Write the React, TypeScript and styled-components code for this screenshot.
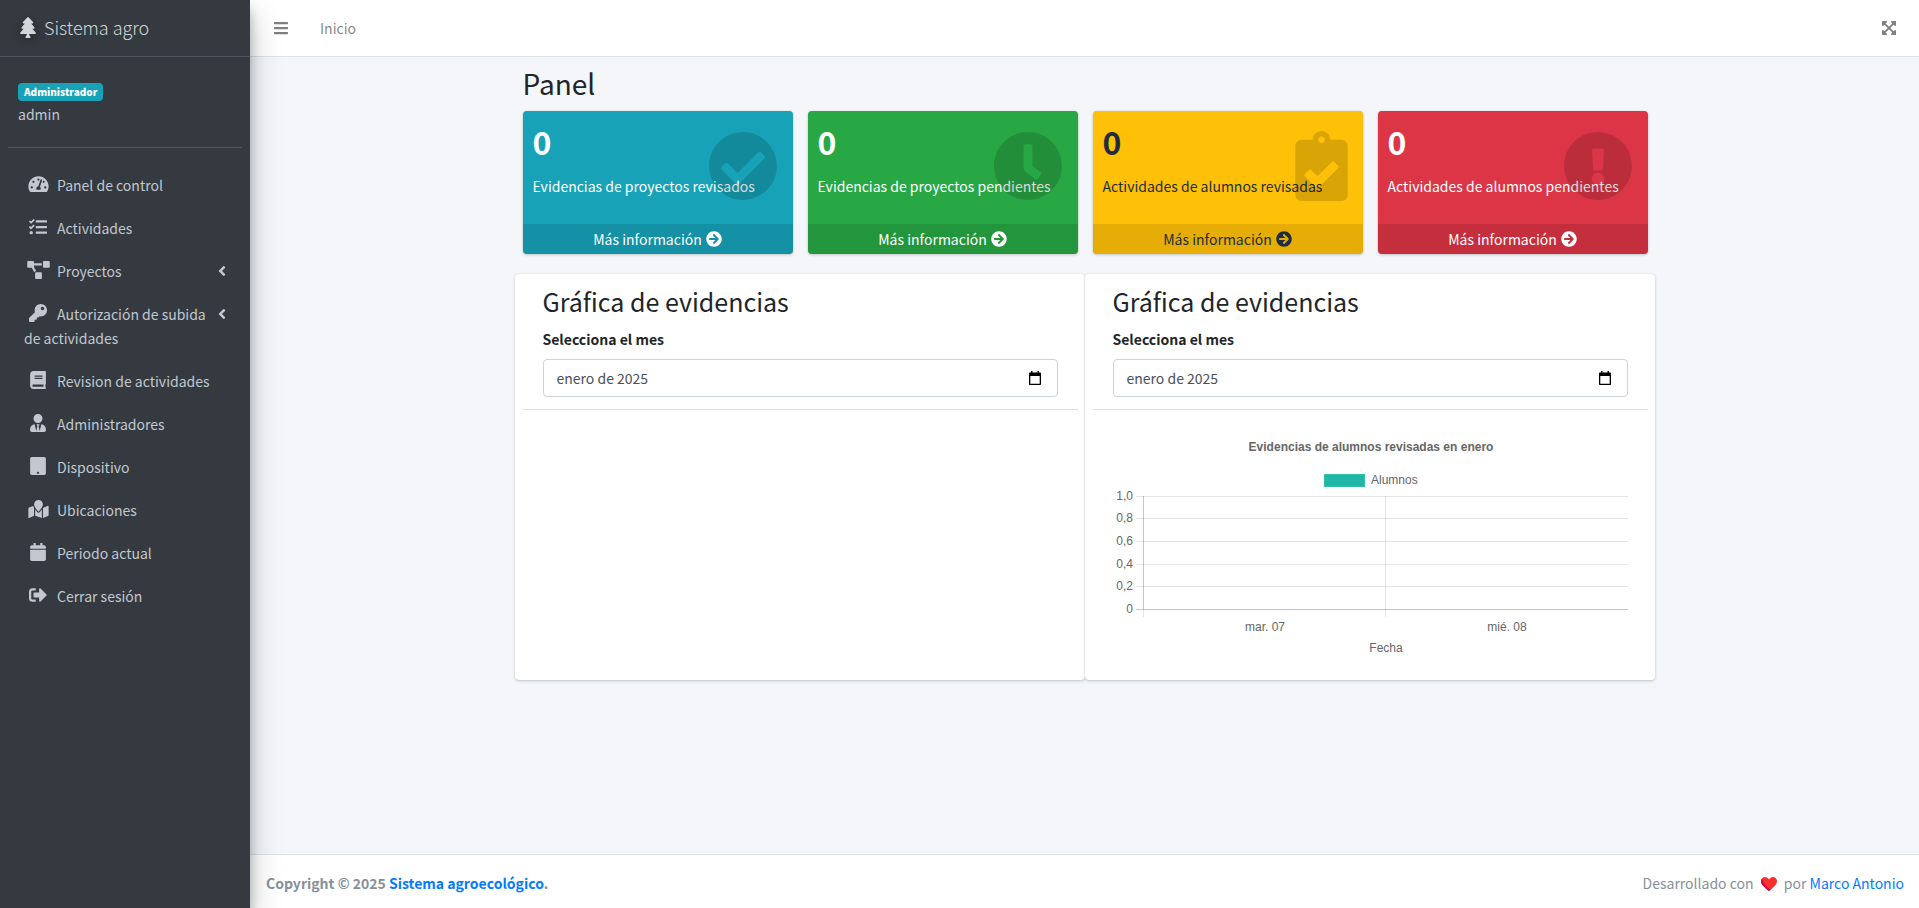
import React from 'react';
import styled, { createGlobalStyle } from 'styled-components';
import type { IconType } from 'react-icons';
import {
  FaAngleLeft,
  FaArrowCircleRight,
  FaBars,
  FaBook,
  FaCalendar,
  FaCheckCircle,
  FaClipboardCheck,
  FaClock,
  FaExclamationCircle,
  FaExpandArrowsAlt,
  FaKey,
  FaMapMarked,
  FaProjectDiagram,
  FaSignOutAlt,
  FaTablet,
  FaTachometerAlt,
  FaTasks,
  FaTree,
  FaUserTie,
} from 'react-icons/fa';

const GlobalStyle = createGlobalStyle`
  *, *::before, *::after { box-sizing: border-box; }
  body {
    margin: 0;
    background: #f4f6f9;
    color: #212529;
    font-family: 'Noto Sans CJK SC', 'Open Sans', sans-serif;
    font-size: 14px;
    line-height: 24px;
  }
  a { color: #007bff; text-decoration: none; }
  h1, h2, p { margin: 0; font-weight: 400; }
  button { font: inherit; padding: 0; border: 0; background: none; cursor: pointer; }
`;

const Page = styled.div`
  display: flex;
  min-height: 100vh;
`;

/* ---------- Sidebar ---------- */

const Sidebar = styled.aside`
  position: relative;
  z-index: 2;
  flex: 0 0 250px;
  background: #343a40;
  color: #c2c7d0;
  box-shadow: 0 14px 28px rgba(0, 0, 0, 0.25), 0 10px 10px rgba(0, 0, 0, 0.22);
`;

const Brand = styled.a`
  display: flex;
  align-items: center;
  gap: 8px;
  height: 57px;
  padding: 0 20px 2px;
  border-bottom: 1px solid #4b545c;
  color: rgba(255, 255, 255, 0.8);
  font-size: 18px;
  font-weight: 300;

  svg {
    width: 16px;
    height: 21px;
    filter: drop-shadow(0 3px 4px rgba(0, 0, 0, 0.4));
  }
`;

const UserPanel = styled.div`
  display: flex;
  flex-direction: column;
  align-items: flex-start;
  margin: 0 8px;
  padding: 26px 10px 21px;
  border-bottom: 1px solid #4f5962;
`;

const Badge = styled.span`
  padding: 0 6px;
  border-radius: 4px;
  background: #17a2b8;
  color: #fff;
  font-size: 10px;
  font-weight: 900;
  line-height: 18px;
`;

const UserName = styled.a`
  margin-top: 1px;
  color: #c2c7d0;
`;

const Menu = styled.ul`
  display: flex;
  flex-direction: column;
  gap: 3px;
  margin: 17px 8px;
  padding: 0;
  list-style: none;
`;

const MenuLink = styled.a`
  display: flex;
  justify-content: space-between;
  padding: 8px 16px;
  color: #c2c7d0;
`;

const MenuIcon = styled.span<{ $width: number }>`
  display: inline-flex;
  justify-content: center;
  width: 28px;
  margin-right: 5px;
  vertical-align: -2px;

  svg {
    flex: none;
    width: ${(p) => p.$width}px;
    height: 18px;
  }
`;

const Arrow = styled.span`
  display: flex;
  flex: none;
  align-items: center;
  height: 24px;

  svg {
    width: 8px;
    height: 16px;
  }
`;

/* ---------- Main column ---------- */

const Main = styled.div`
  display: flex;
  flex: 1;
  flex-direction: column;
  min-width: 0;
`;

const Topbar = styled.header`
  display: flex;
  align-items: center;
  height: 57px;
  padding: 0 23px 0 24px;
  border-bottom: 1px solid #dee2e6;
  background: #fff;
  color: rgba(0, 0, 0, 0.5);

  a { color: inherit; }
`;

const IconButton = styled.button`
  display: flex;
  color: inherit;

  svg {
    width: 14px;
    height: 16px;
  }
`;

const TopNav = styled.nav`
  flex: 1;
  margin-left: 32px;
`;

const Content = styled.main`
  flex: 1;
  width: 100%;
  max-width: 1140px;
  margin: 0 auto;
  padding-top: 7px;
`;

const PageTitle = styled.h1`
  padding: 0 8px;
  font-size: 28px;
  line-height: 38px;
`;

const Boxes = styled.div`
  display: grid;
  grid-template-columns: repeat(4, 1fr);
  gap: 15px;
  margin: 9px 7px 20px 8px;
`;

const cardShadow = '0 0 1px rgba(0, 0, 0, 0.125), 0 1px 3px rgba(0, 0, 0, 0.2)';

const Box = styled.section<{ $bg: string; $fg: string }>`
  position: relative;
  overflow: hidden;
  border-radius: 4px;
  background: ${(p) => p.$bg};
  color: ${(p) => p.$fg};
  box-shadow: ${cardShadow};
`;

const BoxBody = styled.div`
  height: 113px;
  padding: 8px 10px;
`;

const Count = styled.p`
  margin-bottom: 11px;
  font-size: 32px;
  font-weight: 700;
  line-height: 44px;
`;

const BoxIcon = styled.span<{ $width: number }>`
  position: absolute;
  top: 20px;
  right: 15px;
  display: flex;
  color: rgba(0, 0, 0, 0.15);

  svg {
    width: ${(p) => p.$width}px;
    height: 70px;
  }
`;

const BoxFooter = styled.a`
  display: flex;
  align-items: center;
  justify-content: center;
  gap: 4px;
  height: 30px;
  background: rgba(0, 0, 0, 0.1);
  color: inherit;

  svg {
    width: 16px;
    height: 16px;
  }
`;

const Charts = styled.div`
  display: grid;
  grid-template-columns: repeat(2, 1fr);
`;

const Card = styled.section`
  min-height: 406px;
  border-radius: 4px;
  background: #fff;
  box-shadow: ${cardShadow};
`;

const CardHead = styled.div`
  margin: 0 7px 0 8px;
  padding: 10px 20px 12px;
  border-bottom: 1px solid rgba(0, 0, 0, 0.125);
`;

const CardTitle = styled.h2`
  margin-bottom: 9px;
  font-size: 25px;
  line-height: 34px;
`;

const Label = styled.label`
  display: block;
  margin-bottom: 8px;
  font-weight: 700;
`;

const Field = styled.div`
  display: flex;
  align-items: center;
  height: 38px;
  padding: 0 15px 0 13px;
  border: 1px solid #ced4da;
  border-radius: 4px;
  background: #fff;
`;

const MonthInput = styled.input`
  flex: 1;
  min-width: 0;
  padding: 0;
  border: 0;
  outline: 0;
  background: none;
  color: #495057;
  font: inherit;
`;

const ChartArea = styled.div`
  padding: 20px 27px 20px 28px;

  svg {
    display: block;
    width: 100%;
    height: auto;
  }

  text {
    fill: #666;
    font-family: 'Liberation Sans', Arial, sans-serif;
    font-size: 12px;
  }
`;

const Footer = styled.footer`
  display: flex;
  justify-content: space-between;
  padding: 16px 15px 13px 16px;
  border-top: 1px solid #dee2e6;
  background: #fff;
  color: #869099;

  svg {
    margin: 0 4px;
    vertical-align: -3px;
  }
`;

const menu: { label: string; icon: IconType; width?: number; sub?: boolean }[] = [
  { label: 'Panel de control', icon: FaTachometerAlt, width: 21 },
  { label: 'Actividades', icon: FaTasks },
  { label: 'Proyectos', icon: FaProjectDiagram, width: 23, sub: true },
  { label: 'Autorización de subida de actividades', icon: FaKey, sub: true },
  { label: 'Revision de actividades', icon: FaBook },
  { label: 'Administradores', icon: FaUserTie },
  { label: 'Dispositivo', icon: FaTablet },
  { label: 'Ubicaciones', icon: FaMapMarked, width: 21 },
  { label: 'Periodo actual', icon: FaCalendar },
  { label: 'Cerrar sesión', icon: FaSignOutAlt },
];

const boxes: { label: string; icon: IconType; width: number; bg: string; fg: string }[] = [
  { label: 'Evidencias de proyectos revisados', icon: FaCheckCircle, width: 70, bg: '#17a2b8', fg: '#fff' },
  { label: 'Evidencias de proyectos pendientes', icon: FaClock, width: 70, bg: '#28a745', fg: '#fff' },
  { label: 'Actividades de alumnos revisadas', icon: FaClipboardCheck, width: 53, bg: '#ffc107', fg: '#1f2d3d' },
  { label: 'Actividades de alumnos pendientes', icon: FaExclamationCircle, width: 70, bg: '#dc3545', fg: '#fff' },
];

const ticks = [
  { label: '1,0', y: 66 },
  { label: '0,8', y: 88 },
  { label: '0,6', y: 111 },
  { label: '0,4', y: 134 },
  { label: '0,2', y: 156 },
  { label: '0', y: 179 },
];

function EvidenceChart() {
  return (
    <svg viewBox="0 0 515 230" role="img" aria-label="Evidencias de alumnos revisadas en enero">
      <text x="258" y="21" textAnchor="middle" fontWeight="700">
        Evidencias de alumnos revisadas en enero
      </text>
      <rect x="211.5" y="44.5" width="40" height="12" fill="#20b7a9" stroke="#34c0a4" />
      <text x="258" y="54">Alumnos</text>
      <g shapeRendering="crispEdges">
        {ticks.map((t) => (
          <rect key={t.label} x="23" y={t.y} width="492" height="1" fill="#000" fillOpacity={t.y === 179 ? 0.22 : 0.1} />
        ))}
        <rect x="30" y="66" width="1" height="113" fill="#000" fillOpacity="0.22" />
        <rect x="30" y="179" width="1" height="8" fill="#000" fillOpacity="0.1" />
        <rect x="272" y="66" width="1" height="121" fill="#000" fillOpacity="0.1" />
      </g>
      {ticks.map((t) => (
        <text key={t.label} x="20" y={t.y + 4} textAnchor="end">
          {t.label}
        </text>
      ))}
      <text x="152" y="201" textAnchor="middle">mar. 07</text>
      <text x="394" y="201" textAnchor="middle">mié. 08</text>
      <text x="273" y="222" textAnchor="middle">Fecha</text>
    </svg>
  );
}

function MonthCard({ id, children }: { id: string; children?: React.ReactNode }) {
  return (
    <Card>
      <CardHead>
        <CardTitle>Gráfica de evidencias</CardTitle>
        <Label htmlFor={id}>Selecciona el mes</Label>
        <Field>
          <MonthInput id={id} type="text" defaultValue="enero de 2025" />
          <IconButton type="button" aria-label="Abrir calendario">
            <svg viewBox="0 0 14 16" fill="#000" aria-hidden="true">
              <path d="M3 1h1.5v1.5h5V1H11v1.5h1c.6 0 1 .4 1 1V14c0 .6-.4 1-1 1H2c-.6 0-1-.4-1-1V3.500c0-.6.4-1 1-1h1zM2.300 6v7.700h9.400V6z" />
            </svg>
          </IconButton>
        </Field>
      </CardHead>
      {children && <ChartArea>{children}</ChartArea>}
    </Card>
  );
}

export default function App() {
  return (
    <>
      <GlobalStyle />
      <Page>
        <Sidebar>
          <Brand href="#">
            <FaTree />
            Sistema agro
          </Brand>
          <UserPanel>
            <Badge>Administrador</Badge>
            <UserName href="#">admin</UserName>
          </UserPanel>
          <nav>
            <Menu>
              {menu.map(({ label, icon: Icon, width = 18, sub }) => (
                <li key={label}>
                  <MenuLink href="#">
                    <span>
                      <MenuIcon $width={width}>
                        <Icon />
                      </MenuIcon>
                      {label}
                    </span>
                    {sub && (
                      <Arrow>
                        <FaAngleLeft />
                      </Arrow>
                    )}
                  </MenuLink>
                </li>
              ))}
            </Menu>
          </nav>
        </Sidebar>
        <Main>
          <Topbar>
            <IconButton type="button" aria-label="Menú">
              <FaBars />
            </IconButton>
            <TopNav>
              <a href="#">Inicio</a>
            </TopNav>
            <IconButton type="button" aria-label="Pantalla completa">
              <FaExpandArrowsAlt />
            </IconButton>
          </Topbar>
          <Content>
            <PageTitle>Panel</PageTitle>
            <Boxes>
              {boxes.map(({ label, icon: Icon, width, bg, fg }) => (
                <Box key={label} $bg={bg} $fg={fg}>
                  <BoxBody>
                    <Count>0</Count>
                    <p>{label}</p>
                  </BoxBody>
                  <BoxIcon $width={width}>
                    <Icon />
                  </BoxIcon>
                  <BoxFooter href="#">
                    Más información
                    <FaArrowCircleRight />
                  </BoxFooter>
                </Box>
              ))}
            </Boxes>
            <Charts>
              <MonthCard id="mes-proyectos" />
              <MonthCard id="mes-alumnos">
                <EvidenceChart />
              </MonthCard>
            </Charts>
          </Content>
          <Footer>
            <strong>
              Copyright © 2025 <a href="#">Sistema agroecológico</a>.
            </strong>
            <span>
              Desarrollado con{' '}
              <svg width="16" height="16" viewBox="0 0 16 16" aria-label="amor">
                <path
                  d="M8 15C5.500 12.800 0 9.300 0 5.200 0 2.800 1.800 1 4 1c1.700 0 3.200.9 4 2.400C8.800 1.900 10.300 1 12 1c2.200 0 4 1.800 4 4.200 0 4.100-5.500 7.600-8 9.800z"
                  fill="#f8312f"
                />
                <path d="M0 5.200C0 9.300 5.500 12.800 8 15c.5-.4 1-.9 1.700-1.400C6 11.200 1.800 8 1.400 2.200.5 3 0 4 0 5.200z" fill="#ca0b4a" />
              </svg>{' '}
              por <a href="#">Marco Antonio</a>
            </span>
          </Footer>
        </Main>
      </Page>
    </>
  );
}
